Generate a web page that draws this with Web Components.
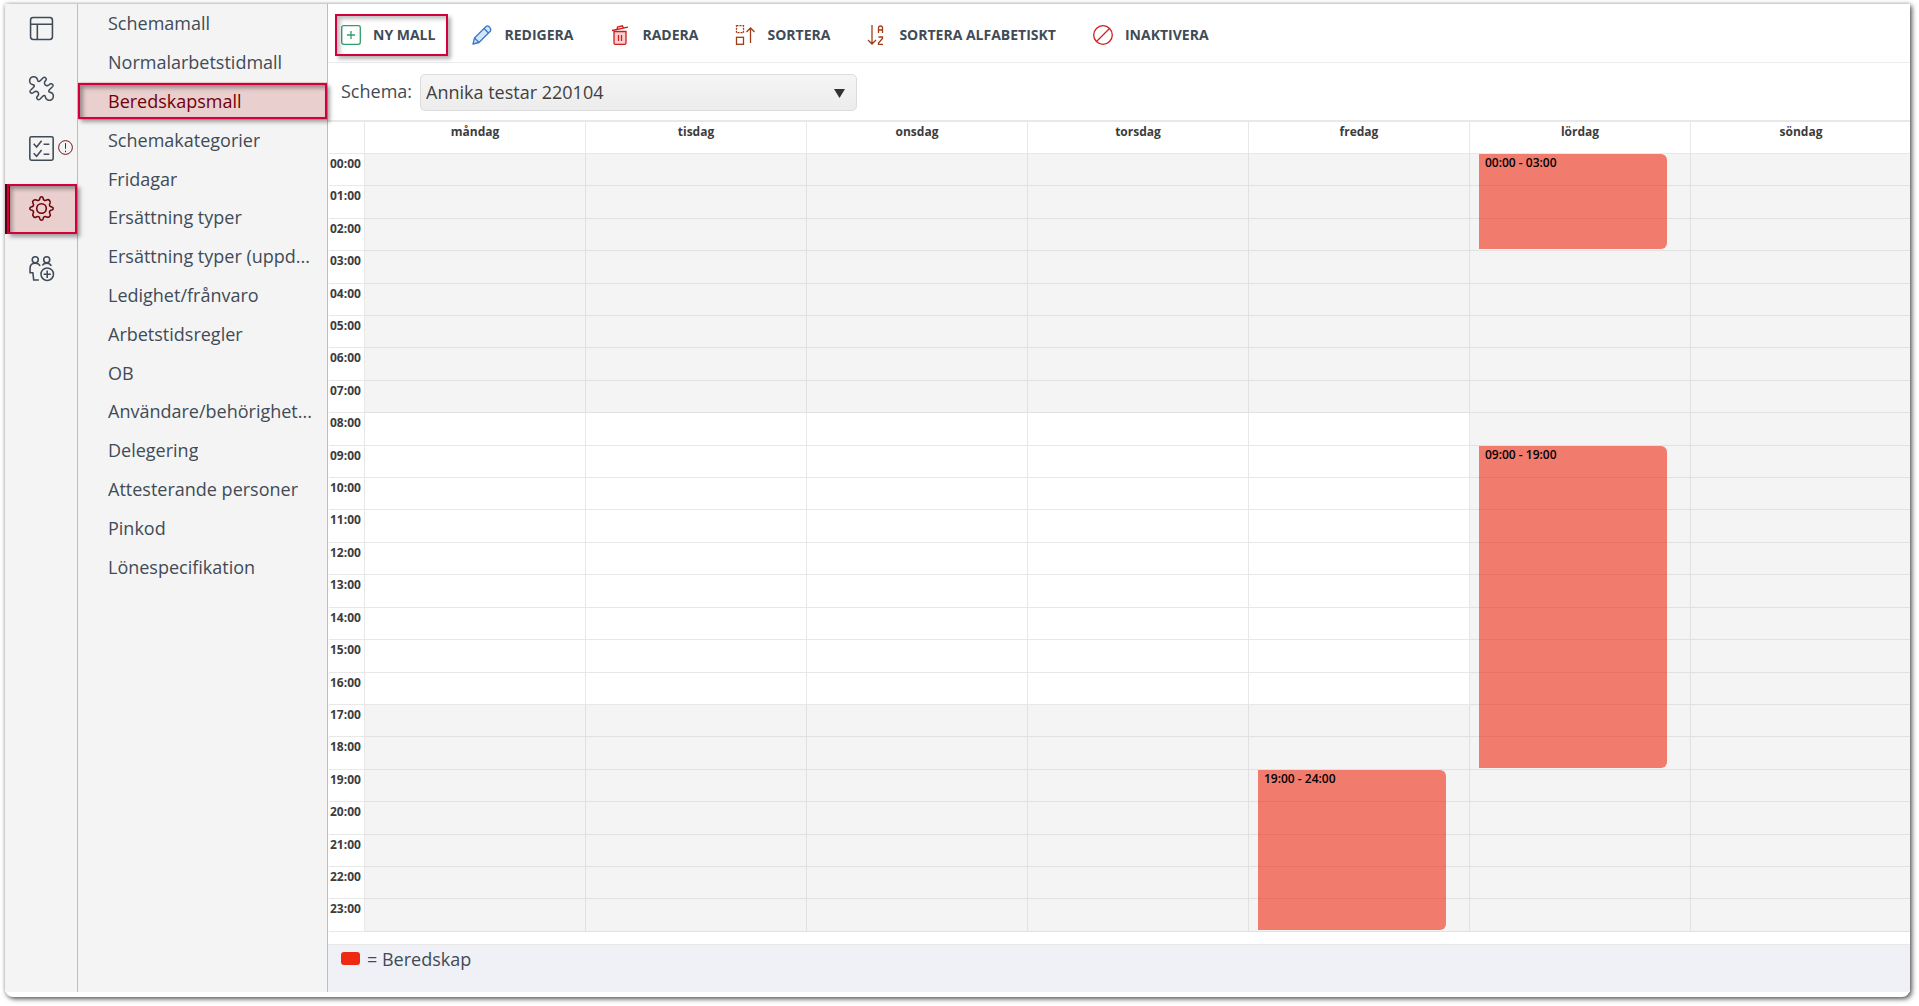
<!DOCTYPE html>
<html lang="sv">
<head>
<meta charset="utf-8">
<title>Beredskapsmall</title>
<style>
html, body { height: 100%; margin: 0; }
body { background: #fff; font-family: "Open Sans", sans-serif; font-size: 18px; color: #404b57; }
</style>
</head>
<body>
<schedule-app></schedule-app>
<script>
const define = (name, html, setup) => {
  const tpl = document.createElement('template');
  tpl.innerHTML = html;
  customElements.define(name, class extends HTMLElement {
    connectedCallback() {
      if (this.shadowRoot) return;
      this.attachShadow({ mode: 'open' }).append(tpl.content.cloneNode(true));
      if (setup) setup(this, this.shadowRoot);
    }
  });
};

// Half of the jigsaw outline; the other half is the same curve turned 180 degrees.
const jigsawHalf = '<path d="M1.500 13.700L4.200 11C5.800 9.400 5 8.300 3.500 8.300C1 8 .2 5.500 .8 3.300C1.500 1 4 .2 6 1C8 1.800 8.200 3 8.300 4C8.500 5.600 9.800 5.600 11 4.300L13.600 1.700C15 .5 16.800 1.800 16.600 3.400C16.500 4.400 14.500 5 14.800 7C15 9 17.500 10 19 8.600C20 7.600 20.600 7.200 21.600 7.500C23.200 8 23.500 9.500 22.500 10.300"/>';

const icons = {
  layout: '<rect x="1.500" y="1.500" width="21" height="21" rx="2.500"/><path d="M1.500 8h21M8 8v14.500"/>',
  puzzle: jigsawHalf + `<g transform="rotate(180 12 12)">${jigsawHalf}</g>`,
  tasks: '<rect x=".8" y=".8" width="22.400" height="22.400" rx="1.500"/><path d="M4.500 7.500l2.800 3 4.800-6M14 8h5.500M4.500 16.500l2.800 3 4.800-6M14 17.500h5.500"/>',
  gear: '<circle cx="12" cy="12" r="4.600"/><path d="M9.300 4.200Q10.300 3.500 10.500 2Q10.700 .8 12 .8T13.500 2Q13.700 3.500 14.700 4.200Q15.800 4.700 17.200 3.800Q18.600 2.900 19.700 4.300T20.200 6.800Q19.300 8.200 19.800 9.300Q20.500 10.300 22 10.500Q23.200 10.700 23.200 12T22 13.500Q20.500 13.700 19.800 14.700Q19.300 15.800 20.200 17.200Q21.100 18.600 19.700 19.700T17.200 20.200Q15.800 19.300 14.700 19.800Q13.700 20.500 13.500 22Q13.300 23.200 12 23.200T10.500 22Q10.300 20.500 9.300 19.800Q8.200 19.300 6.800 20.200Q5.400 21.100 4.300 19.700T3.800 17.200Q4.700 15.800 4.200 14.700Q3.500 13.700 2 13.500Q.8 13.300 .8 12T2 10.500Q3.500 10.300 4.200 9.300Q4.700 8.200 3.800 6.800Q2.900 5.400 4.300 4.300T6.800 3.800Q8.200 4.700 9.300 4.200z" stroke-linejoin="round"/>',
  people: '<circle cx="6" cy="3.600" r="2.900"/><circle cx="17" cy="3.600" r="2.900"/><path d="M9.500 23H4.500L3.700 16H1v-4c0-3 2-5 5-5 2.300 0 4 1 4.600 2.700M12.800 9c.8-1.400 2.300-2 4.200-2 2 0 3.600.8 4.400 2.500"/><circle cx="17.500" cy="17.500" r="6"/><path d="M17.500 14v7M14 17.500h7"/>',
  alert: '<circle cx="12" cy="12" r="11"/><path d="M12 5v9M12 17v2.500"/>',
};
const tools = {
  add: '<g stroke="#2f9e68"><rect x=".7" y=".7" width="18.600" height="18.600" rx="2"/><path d="M10 6v8M6 10h8"/></g>',
  edit: '<g stroke="#3a78c9" fill="#d5e4f6" stroke-linejoin="round"><path d="M1 19l1.500-6L14 1.500q1.500-1.500 3.500.500t1 4L7 17.500z"/><path d="M12 3.500L16.500 8M2.500 13L7 17.500" fill="none"/></g>',
  trash: '<g stroke="#cc1f1f"><path d="M4 6.500h12V18q0 1.300-1.300 1.300H5.300Q4 19.300 4 18z" fill="#f9cfcf"/><path d="M2 5.500L18 2.200M7 4.300L7.500 2l5-1.200.8 2.100M8.500 10v6M11.500 10v6"/></g>',
  sort: '<g stroke="#a03c18"><rect x="1.500" y="12.300" width="7" height="7"/><rect x="1.500" y=".7" width="7" height="7" stroke-dasharray="2 1"/><path d="M15.500 18V3M11.500 7l4-4 4 4"/></g>',
  az: '<g stroke="#a03c18"><path d="M5 0v19M1 15l4 4 4-4M11.500 8V3q0-2 2-2t2 2v5M11.500 5h4M11.500 12h4v1.500L11.500 18v1.300h4.500"/></g>',
  ban: '<g stroke="#cc1f1f"><circle cx="10" cy="10" r="9.300"/><path d="M3.500 16.500l13-13"/></g>',
};

define('rail-item', `<style>
:host { display: block; position: relative; margin-bottom: 10px; }
a { box-sizing: border-box; display: flex; align-items: center; justify-content: center; height: 50px; padding-bottom: 2px; color: #404b57; }
svg { width: 25px; height: 25px; fill: none; stroke: currentColor; stroke-width: 1.500; overflow: visible; }
:host([active]) a { background: #eacfcf; color: #700008; box-shadow: inset 5px 0 #600010; }
:host([active])::after { content: ""; position: absolute; inset: 0 0 0 2px; border: 2px solid #d3003c; box-shadow: 3px 3px 4px rgba(0,0,0,.35), inset 3px 3px 4px rgba(0,0,0,.35); pointer-events: none; z-index: 2; }
.badge { position: absolute; right: 4px; top: 16px; width: 15px; height: 15px; color: #700008; }
</style><a href="#"></a>`, (el, root) => {
  const a = root.querySelector('a');
  a.setAttribute('aria-label', el.getAttribute('label'));
  a.innerHTML = `<svg viewBox="0 0 24 24">${icons[el.getAttribute('icon')]}</svg>`;
  if (el.hasAttribute('alert')) a.insertAdjacentHTML('beforeend', `<svg class="badge" viewBox="0 0 24 24">${icons.alert}</svg>`);
});

define('nav-item', `<style>
:host { display: block; position: relative; }
a { display: flex; align-items: center; height: 100%; padding: 0 14px 0 30px; color: #404b57; text-decoration: none; }
span { overflow: hidden; text-overflow: ellipsis; white-space: nowrap; }
:host([active]) a { background: #eacfcf; color: #700008; }
:host([active])::after { content: ""; position: absolute; inset: 1px 0; border: 2px solid #d3003c; box-shadow: 3px 3px 4px rgba(0,0,0,.35), inset 3px 3px 4px rgba(0,0,0,.35); pointer-events: none; z-index: 2; }
</style><a href="#"><span><slot></slot></span></a>`);

define('tool-button', `<style>
:host { display: block; position: relative; }
button { display: flex; align-items: center; gap: 12px; height: 40px; padding: 0; border: 0; background: none; font: bold 14px/20px "Open Sans", sans-serif; color: #404b57; white-space: nowrap; }
svg { width: 20px; height: 20px; fill: none; stroke-width: 1.300; overflow: visible; }
:host([marked])::after { content: ""; position: absolute; inset: -1px -13px -1px -6px; border: 2px solid #d3003c; box-shadow: 3px 3px 4px rgba(0,0,0,.3), inset 3px 3px 4px rgba(0,0,0,.25); pointer-events: none; }
</style><button type="button"><svg viewBox="0 0 20 20" aria-hidden="true"></svg><slot></slot></button>`, (el, root) => {
  root.querySelector('svg').innerHTML = tools[el.getAttribute('icon')];
});

define('schema-picker', `<style>
:host { display: flex; align-items: center; gap: 8px; height: 57px; padding: 1px 13px 0; box-sizing: border-box; }
label { padding-bottom: 3px; }
.box { position: relative; }
select { appearance: none; width: 437px; height: 37px; padding: 0 5px; border: 1px solid #dcdcdc; border-radius: 5px; background: linear-gradient(#f5f5f5, #ececec); font: 18px "Open Sans", sans-serif; color: #404040; }
svg { position: absolute; right: 12px; top: 15px; width: 11px; height: 9px; fill: #333; pointer-events: none; }
</style><label for="s">Schema:</label><div class="box"><select id="s"><option>Annika testar 220104</option></select><svg viewBox="0 0 11 9"><path d="M0 0h11L5.500 9z"/></svg></div>`);

define('week-grid', `<style>
:host { display: block; position: relative; overflow: hidden; padding-left: 1px; border-top: 2px solid #e8e8e8; }
table { width: calc(100% + 2px); height: 810px; table-layout: fixed; border-collapse: separate; border-spacing: 0; font-size: 12px; line-height: 16px; color: #3c3c3c; }
th, td { box-sizing: border-box; padding: 0; vertical-align: top; border: 0 solid #e8e8e8; border-width: 0 1px 1px 0; }
thead th { height: 32px; padding-top: 2px; }
th:first-child { width: 36px; text-align: left; }
tbody th { padding: 2px 0 0 1px; }
td { background: #f4f4f4; border-color: #e1e1e1; }
td.work { background: #fff; border-color: #e8e8e8; }
.events { position: absolute; top: 32px; bottom: 0; left: 37px; right: -2px; display: grid; grid-template: repeat(24, 1fr) / repeat(7, 1fr); pointer-events: none; }
.event { margin: 0 24px 2px 9px; padding: 1px 6px; border-radius: 0 6px 6px 0; background: rgba(238,42,18,.6); color: #000; font-size: 12px; font-weight: 600; line-height: 16px; }
</style><table><thead><tr><th></th></tr></thead><tbody></tbody></table><div class="events"></div>`, (el, root) => {
  const days = ['måndag', 'tisdag', 'onsdag', 'torsdag', 'fredag', 'lördag', 'söndag'];
  root.querySelector('thead tr').insertAdjacentHTML('beforeend', days.map(d => `<th scope="col">${d}</th>`).join(''));
  const hour = h => String(h).padStart(2, '0') + ':00';
  root.querySelector('tbody').innerHTML = Array.from({ length: 24 }, (_, h) =>
    `<tr><th scope="row">${hour(h)}</th>` + days.map((d, i) => `<td${i < 5 && h > 7 && h < 17 ? ' class="work"' : ''}></td>`).join('') + '</tr>').join('');
  root.querySelector('.events').innerHTML = [[6, 0, 3], [6, 9, 19], [5, 19, 24]].map(([d, a, b]) =>
    `<div class="event" style="grid-area:${a + 1}/${d}/${b + 1}/${d + 1}">${hour(a)} - ${hour(b)}</div>`).join('');
});

define('color-legend', `<style>
:host { display: flex; align-items: flex-start; gap: 7px; flex: 1; margin-top: 12px; padding: 0 13px; border-top: 1px solid #e8e8e8; background: #eff1f6; line-height: 28px; }
i { width: 19px; height: 13px; margin-top: 7px; border-radius: 3px; background: #ee2a12; }
</style><i></i><span><slot></slot></span>`);

define('schedule-app', `<style>
:host { display: block; box-sizing: border-box; height: 100%; padding: 4px 9px 9px 5px; }
.frame { box-sizing: border-box; display: flex; height: 100%; padding-bottom: 5px; border-radius: 0 0 8px 8px; background: #fff; box-shadow: 0 0 4px rgba(0,0,0,.25), 2px 2px 5px rgba(0,0,0,.6); }
.rail { box-sizing: border-box; width: 73px; border-right: 1px solid #bdbdbd; background: #f4f4f4; }
.nav { box-sizing: border-box; width: 250px; border-right: 1px solid #bdbdbd; background: #f4f4f4; }
.list { display: grid; grid-auto-rows: 1fr; height: 582px; }
main { flex: 1; min-width: 0; display: flex; flex-direction: column; }
.tools { display: flex; align-items: center; gap: 37px; box-sizing: border-box; height: 59px; padding: 3px 13px 0; border-bottom: 1px solid #ececec; }
</style><div class="frame">
<nav class="rail" aria-label="Moduler">
<rail-item icon="layout" label="Översikt"></rail-item><rail-item icon="puzzle" label="Tillägg"></rail-item><rail-item icon="tasks" label="Uppgifter" alert></rail-item><rail-item icon="gear" label="Inställningar" active></rail-item><rail-item icon="people" label="Personal"></rail-item>
</nav>
<nav class="nav" aria-label="Inställningar"><div class="list">
<nav-item>Schemamall</nav-item><nav-item>Normalarbetstidmall</nav-item><nav-item active>Beredskapsmall</nav-item><nav-item>Schemakategorier</nav-item><nav-item>Fridagar</nav-item><nav-item>Ersättning typer</nav-item><nav-item>Ersättning typer (uppd...</nav-item><nav-item>Ledighet/frånvaro</nav-item><nav-item>Arbetstidsregler</nav-item><nav-item>OB</nav-item><nav-item>Användare/behörighet...</nav-item><nav-item>Delegering</nav-item><nav-item>Attesterande personer</nav-item><nav-item>Pinkod</nav-item><nav-item>Lönespecifikation</nav-item>
</div></nav>
<main>
<div class="tools" role="toolbar">
<tool-button icon="add" marked>NY MALL</tool-button><tool-button icon="edit">REDIGERA</tool-button><tool-button icon="trash">RADERA</tool-button><tool-button icon="sort">SORTERA</tool-button><tool-button icon="az">SORTERA ALFABETISKT</tool-button><tool-button icon="ban">INAKTIVERA</tool-button>
</div>
<schema-picker></schema-picker>
<week-grid></week-grid>
<color-legend>= Beredskap</color-legend>
</main></div>`);
</script>
</body>
</html>
